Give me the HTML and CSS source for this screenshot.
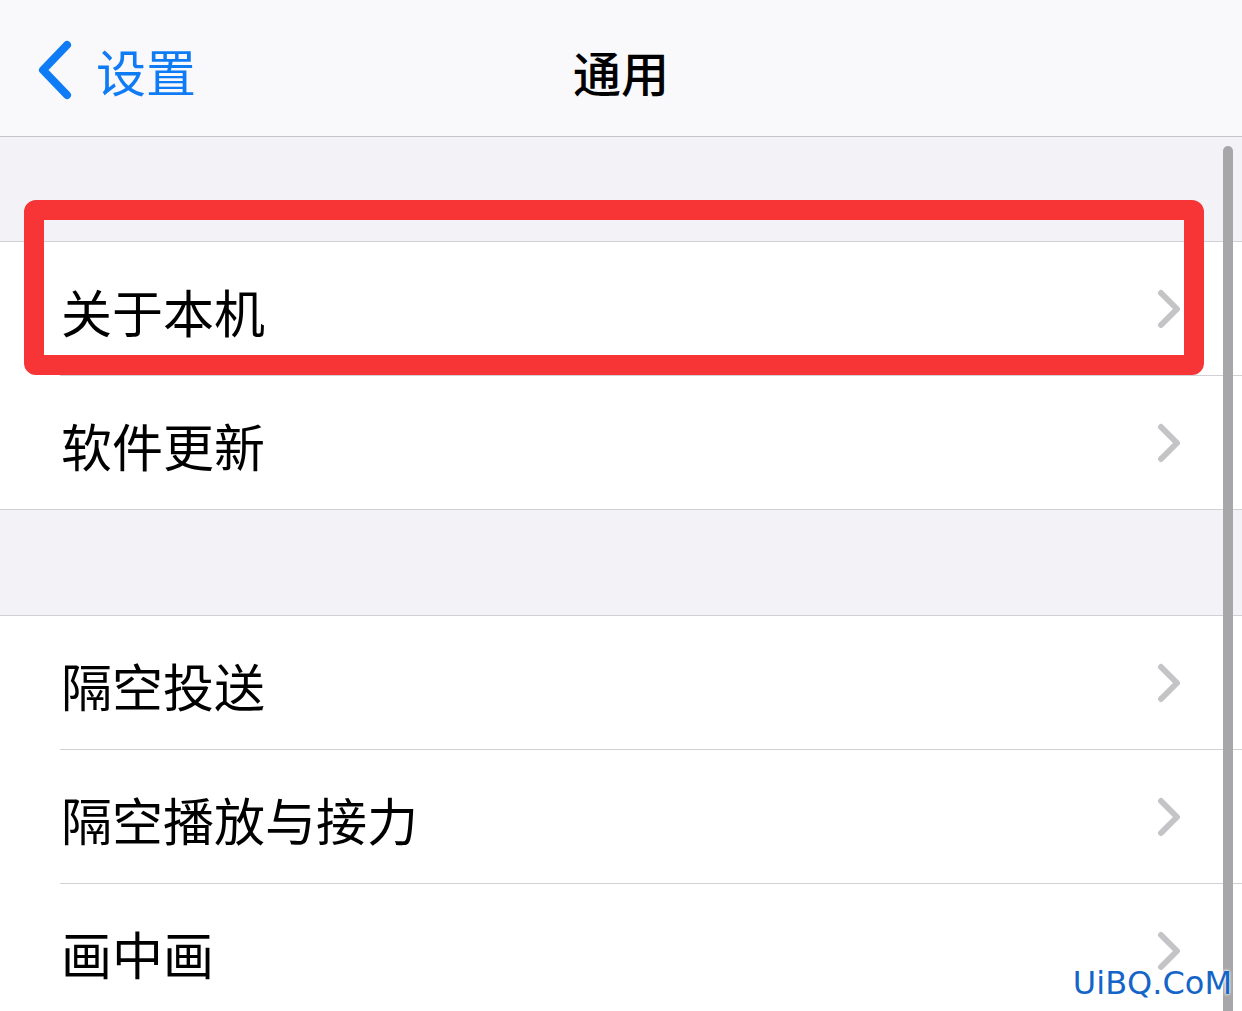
FILE: index.html
```html
<!DOCTYPE html>
<html lang="zh-CN">
<head>
    <meta charset="UTF-8">
    <meta name="viewport" content="width=device-width, initial-scale=1.0">
    <title>通用</title>
    <link rel="stylesheet" href="styles.css">
</head>
<body>
<div id="screen">
    <!-- top navigation bar -->
    <div id="navBar">
        <div class="nav-back">
            <svg width="38" height="60" viewBox="0 0 38 60">
                <path d="M31 5 L7 30 L31 55" fill="none" stroke="#0f7cf6" stroke-width="8" stroke-linecap="round" stroke-linejoin="round"/>
            </svg>
            <span>设置</span>
        </div>
        <div class="nav-title">通用</div>
    </div>

    <div id="list">
        <div class="group">
            <div class="row">
                <span>关于本机</span>
                <svg class="chevron" width="24" height="40" viewBox="0 0 24 40"><path d="M4 4 L20 20 L4 36" /></svg>
            </div>
            <div class="row">
                <span>软件更新</span>
                <svg class="chevron" width="24" height="40" viewBox="0 0 24 40"><path d="M4 4 L20 20 L4 36" /></svg>
            </div>
        </div>

        <div class="group">
            <div class="row">
                <span>隔空投送</span>
                <svg class="chevron" width="24" height="40" viewBox="0 0 24 40"><path d="M4 4 L20 20 L4 36" /></svg>
            </div>
            <div class="row">
                <span>隔空播放与接力</span>
                <svg class="chevron" width="24" height="40" viewBox="0 0 24 40"><path d="M4 4 L20 20 L4 36" /></svg>
            </div>
            <div class="row">
                <span>画中画</span>
                <svg class="chevron" width="24" height="40" viewBox="0 0 24 40"><path d="M4 4 L20 20 L4 36" /></svg>
            </div>
        </div>
    </div>

    <!-- overlays -->
    <div class="highlight"></div>
    <div class="scroll-thumb"></div>
    <div class="watermark">UiBQ.CoM</div>
</div>
</body>
</html>
```

FILE: styles.css
```css
html, body {
    margin: 0;
    padding: 0;
}

body {
    font-family: "Noto Sans CJK SC", "Noto Sans", sans-serif;
    background-color: #f2f2f7;
    color: #000;
}

#screen {
    position: relative;
    width: 1242px;
    height: 1011px;
    overflow: hidden;
}

#navBar {
    position: relative;
    height: 136px;
    background-color: #f9f9fb;
    border-bottom: 1px solid #c6c6c9;
    display: flex;
    align-items: center;
    justify-content: center;
}

.nav-back {
    position: absolute;
    left: 36px;
    top: 40px;
    display: flex;
    align-items: center;
    gap: 22px;
    color: #0f7cf6;
    font-size: 50px;
    line-height: 60px;
}

.nav-title {
    font-size: 48px;
    font-weight: 500;
    padding-top: 6px;
}

#list {
    padding-top: 104px;
}

.group {
    background-color: #fff;
    border-top: 1px solid #d1d1d5;
    border-bottom: 1px solid #d1d1d5;
    margin-bottom: 105px;
    padding-left: 60px;
}

.row {
    height: 133px;
    display: flex;
    align-items: center;
    justify-content: space-between;
    padding-right: 61px;
    font-size: 51px;
    border-bottom: 1px solid #d1d1d5;
}

.row:last-child {
    border-bottom: none;
}

.row span {
    padding-top: 4px;
    padding-left: 1px;
}

.chevron path {
    fill: none;
    stroke: #c4c4c7;
    stroke-width: 6;
    stroke-linecap: round;
    stroke-linejoin: round;
}

.highlight {
    position: absolute;
    left: 24px;
    top: 200px;
    width: 1140px;
    height: 135px;
    border: 20px solid #f73536;
    border-radius: 12px;
}

.scroll-thumb {
    position: absolute;
    left: 1223px;
    top: 146px;
    width: 10px;
    height: 900px;
    background-color: #a7a7a9;
    border-radius: 5px;
}

.watermark {
    position: absolute;
    right: 10px;
    bottom: 9px;
    font-family: "DejaVu Sans", sans-serif;
    font-size: 32px;
    color: #1565c8;
    text-shadow: 0 0 3px #fff, 0 0 3px #fff;
}
```
